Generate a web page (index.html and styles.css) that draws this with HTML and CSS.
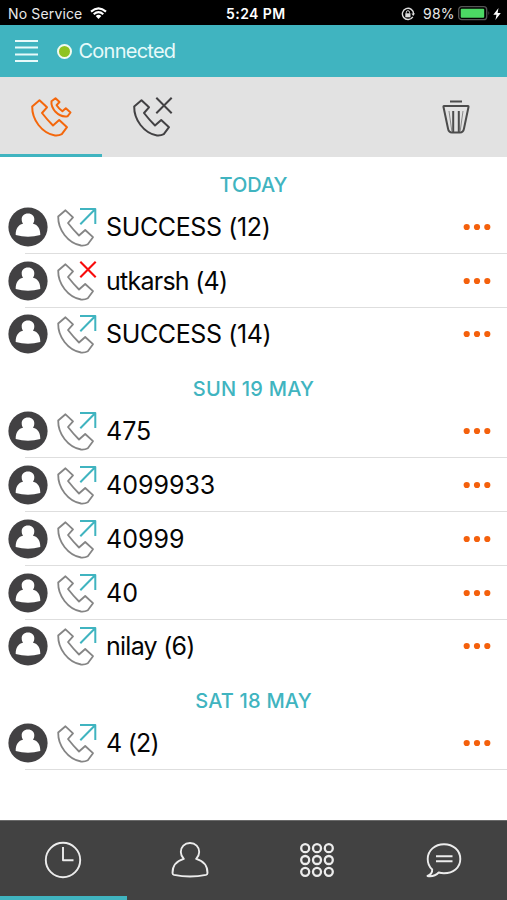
FILE: index.html
```html
<!DOCTYPE html>
<html lang="en">
<head>
<meta charset="utf-8">
<title>Call history</title>
<link rel="stylesheet" href="styles.css">
</head>
<body>
<svg class="defs" aria-hidden="true">
  <symbol id="phone" viewBox="0 0 42 42"><path d="M9.5 4.300L17 11.300L12 17Q17 23.500 23 29.500L29.200 24L37 31.200L31.800 38.200Q29 39.800 25 39.500Q15.500 38 8.500 29Q2 20.500 2.200 10.500Z"/></symbol>
  <symbol id="arrow" viewBox="0 0 42 42"><path d="M24 3H39.300V18M24.300 18.200L39.300 3"/></symbol>
  <symbol id="cross" viewBox="0 0 42 42"><path d="M24.300 1.800L39.700 17.200M39.700 1.800L24.300 17.200"/></symbol>
  <symbol id="avatar" viewBox="0 0 40 40"><circle cx="20" cy="20" r="19.600" fill="#424143"/><path d="M20 6.500c4 0 6.300 2.500 6.300 5.800 0 2.200-.6 3.300-1.300 4.500 5 1 7.300 5.200 7.300 11.200q-12.300 3.400-24.600 0c0-6 2.300-10.200 7.300-11.200-.7-1.200-1.300-2.300-1.300-4.500 0-3.300 2.300-5.800 6.300-5.800z" fill="#fff"/></symbol>
  <symbol id="dots" viewBox="0 0 28 8"><circle cx="3.700" cy="4" r="3.100"/><circle cx="14" cy="4" r="3.100"/><circle cx="24.300" cy="4" r="3.100"/></symbol>
</svg>

<header class="status">
  <span class="carrier">No Service</span>
  <svg class="wifi" width="17" height="13" viewBox="0 0 17 13"><path d="M1 4.600Q8.500-1.900 16 4.600M3.700 7.300Q8.500 3.100 13.300 7.300" fill="none" stroke="#fff" stroke-width="2.100"/><path d="M5.700 9Q8.500 6.600 11.300 9L8.500 12Z" fill="#fff"/></svg>
  <span class="time">5:24 PM</span>
  <svg class="lock" width="14" height="14" viewBox="0 0 14 14"><path d="M11.800 9.800A5.600 5.600 0 1 1 12.600 7" fill="none" stroke="#ddd" stroke-width="1.400"/><path d="M10.400 6.500H14L12.200 9Z" fill="#ddd"/><rect x="4.300" y="6.300" width="5.200" height="4" fill="#ddd"/><path d="M5.300 6.500V5.300a1.600 1.600 0 0 1 3.200 0v1.200" fill="none" stroke="#ddd"/></svg>
  <span class="percent">98%</span>
  <svg class="battery" width="33" height="15" viewBox="0 0 33 15"><rect x=".7" y=".7" width="28" height="13" rx="3" fill="none" stroke="#555" stroke-width="1.300"/><rect x="2.700" y="2.700" width="23.500" height="9" rx="1" fill="#4cd964"/><path d="M30.500 5Q32.300 7.200 30.500 9.400Z" fill="#555"/></svg>
  <svg class="bolt" width="8" height="12" viewBox="0 0 8 12"><path d="M5.500 0L.3 6.700H3.500L2.400 12 7.800 4.900H4.600Z" fill="#fff"/></svg>
</header>

<div class="appbar">
  <svg class="menu" width="23" height="24" viewBox="0 0 23 24"><path d="M0 2H23M0 8.500H23M0 15.500H23M0 22H23" stroke="#e8fafa" stroke-width="2"/></svg>
  <span class="dot"></span>
  <span class="state">Connected</span>
</div>

<nav class="tabs">
  <a class="tab active"><svg class="call orange" width="42" height="42" viewBox="0 0 42 42"><use href="#phone"/><path d="M25.500 2.200L29.500 6L26.600 9.200Q28.800 12.500 32.400 15.200L35.800 12.300L40.500 16.500L37.500 20.300Q31 21.500 25.500 15.800Q20.800 10.500 21.500 5.200Z"/></svg></a>
  <a class="tab"><svg class="call dark" width="42" height="42" viewBox="0 0 42 42"><use href="#phone"/><use href="#cross"/></svg></a>
  <a class="trash"><svg width="28" height="36" viewBox="0 0 28 36"><path d="M8 2.500H20M2 7Q1.300 7 1.500 8L6 29.500Q6.700 33.500 10 33.500H18Q21.300 33.500 22 29.500L26.500 8Q26.700 7 26 7ZM11.200 12V32.500M16.800 12V32.500" fill="none" stroke="#4c4c4c" stroke-width="2"/><path d="M7 12L9.800 32M21 12L18.200 32" fill="none" stroke="#8a8a8a" stroke-width="1"/></svg></a>
</nav>

<main class="log">
  <h2 class="today">TODAY</h2>
  <ul>
    <li><svg class="face"><use href="#avatar"/></svg><svg class="call"><use href="#phone"/><use class="out" href="#arrow"/></svg><span class="name upper">SUCCESS (12)</span><svg class="more"><use href="#dots"/></svg></li>
    <li><svg class="face"><use href="#avatar"/></svg><svg class="call"><use href="#phone"/><use class="missed" href="#cross"/></svg><span class="name lower">utkarsh (4)</span><svg class="more"><use href="#dots"/></svg></li>
    <li><svg class="face"><use href="#avatar"/></svg><svg class="call"><use href="#phone"/><use class="out" href="#arrow"/></svg><span class="name upper">SUCCESS (14)</span><svg class="more"><use href="#dots"/></svg></li>
  </ul>
  <h2>SUN 19 MAY</h2>
  <ul>
    <li><svg class="face"><use href="#avatar"/></svg><svg class="call"><use href="#phone"/><use class="out" href="#arrow"/></svg><span class="name">475</span><svg class="more"><use href="#dots"/></svg></li>
    <li><svg class="face"><use href="#avatar"/></svg><svg class="call"><use href="#phone"/><use class="out" href="#arrow"/></svg><span class="name">4099933</span><svg class="more"><use href="#dots"/></svg></li>
    <li><svg class="face"><use href="#avatar"/></svg><svg class="call"><use href="#phone"/><use class="out" href="#arrow"/></svg><span class="name">40999</span><svg class="more"><use href="#dots"/></svg></li>
    <li><svg class="face"><use href="#avatar"/></svg><svg class="call"><use href="#phone"/><use class="out" href="#arrow"/></svg><span class="name">40</span><svg class="more"><use href="#dots"/></svg></li>
    <li><svg class="face"><use href="#avatar"/></svg><svg class="call"><use href="#phone"/><use class="out" href="#arrow"/></svg><span class="name lower">nilay (6)</span><svg class="more"><use href="#dots"/></svg></li>
  </ul>
  <h2>SAT 18 MAY</h2>
  <ul class="last">
    <li><svg class="face"><use href="#avatar"/></svg><svg class="call"><use href="#phone"/><use class="out" href="#arrow"/></svg><span class="name lower">4 (2)</span><svg class="more"><use href="#dots"/></svg></li>
  </ul>
</main>

<nav class="bottom">
  <a class="active"><svg width="38" height="38" viewBox="0 0 38 38"><circle cx="19" cy="19" r="17.200"/><path d="M19 6V19.200H29.500"/></svg></a>
  <a><svg width="38" height="38" viewBox="0 0 38 38"><path d="M19 2c5.500 0 9.200 4 9.200 9 0 3.200-1.500 5.200-3 6.900 7.300 2 11.300 6.600 11.300 14.100q0 1.500-1.500 1.900-16 3.200-32 0-1.500-.4-1.500-1.900C1.500 24.500 5.500 19.900 12.800 17.900 11.300 16.200 9.800 14.200 9.800 11c0-5 3.700-9 9.200-9z"/></svg></a>
  <a><svg class="pad" width="38" height="38" viewBox="0 0 38 38"><circle cx="7.200" cy="7.200" r="4"/><circle cx="19" cy="7.200" r="4"/><circle cx="30.800" cy="7.200" r="4"/><circle cx="7.200" cy="19" r="4"/><circle cx="19" cy="19" r="4"/><circle cx="30.800" cy="19" r="4"/><circle cx="7.200" cy="30.800" r="4"/><circle cx="19" cy="30.800" r="4"/><circle cx="30.800" cy="30.800" r="4"/></svg></a>
  <a><svg width="38" height="38" viewBox="0 0 38 38"><path d="M2.500 35Q7.500 33 7.200 28.500Q2.700 24.500 2.700 18C2.700 9.500 10 3.200 19 3.200S35.300 9 35.300 18 28 32.200 19 32.200Q16 32.200 13.700 31.500Q9.500 36 2.500 35ZM11 15.200H27.500M11 20.300H27.500"/></svg></a>
</nav>
</body>
</html>
```
FILE: styles.css
```css
* { box-sizing: border-box; }
body {
  margin: 0;
  height: 900px;
  display: flex;
  flex-direction: column;
  background: #fff;
  color: #050505;
  font-family: Inter, "Liberation Sans", sans-serif;
  overflow: hidden;
}
.defs { position: absolute; width: 0; height: 0; }
svg { display: block; flex: none; }

.status {
  height: 25px;
  flex: none;
  display: flex;
  align-items: center;
  padding: 2px 6px 0 8px;
  background: #000;
  color: #e9e9e9;
  font-size: 14px;
  line-height: 20px;
  white-space: nowrap;
}
.carrier { width: 75px; letter-spacing: .15px; }
.wifi { margin-left: 7px; }
.time { margin-left: 119px; width: 61px; color: #fff; font-weight: 600; letter-spacing: .45px; }
.lock { margin-left: 114px; }
.percent { margin-left: 8px; width: 32px; letter-spacing: .2px; }
.battery { margin-left: 3px; }
.bolt { margin-left: auto; }

.appbar {
  height: 52px;
  flex: none;
  display: flex;
  align-items: center;
  padding-left: 15px;
  background: #40b4c0;
  color: #e8fafa;
}
.dot {
  width: 15px;
  height: 15px;
  margin-left: 18.5px;
  border: 2px solid #f2faef;
  border-radius: 50%;
  background: #8fc31f;
}
.state { margin-left: 7px; font-size: 20px; letter-spacing: -.75px; }

.tabs {
  height: 80px;
  flex: none;
  display: flex;
  background: #e2e2e2;
}
.tab {
  width: 102px;
  padding: 19px 0 0 30px;
  border-bottom: 3px solid transparent;
}
.tab.active { border-color: #40b4c0; }
.trash { margin: 22px 37px 0 auto; }

.call {
  width: 42px;
  height: 42px;
  fill: none;
  stroke: #858585;
  stroke-width: 1.8;
  stroke-linejoin: round;
}
.orange { stroke: #f4670c; stroke-width: 2; }
.dark { stroke: #424143; stroke-width: 2; }
.out { stroke: #40b4c0; stroke-width: 2; }
.missed { stroke: #f80b0b; stroke-width: 2.1; }

.log { flex: 1; }
h2 {
  height: 43px;
  margin: 0;
  padding-top: 16px;
  color: #40b4c0;
  font-size: 20px;
  line-height: 24px;
  font-weight: 500;
  letter-spacing: .2px;
  text-align: center;
}
.today { letter-spacing: 0; }
ul { margin: 0; padding: 0; list-style: none; }
li {
  height: 53.8px;
  display: flex;
  align-items: center;
  padding: 0 16px 0 8px;
  background: linear-gradient(#dedede, #dedede) 25px 100% / 482px 1px no-repeat;
}
li:last-child { background: none; }
.last li:last-child { background: linear-gradient(#dedede, #dedede) 25px 100% / 482px 1px no-repeat; }
.face { width: 40px; height: 40px; }
li .call { margin-left: 8px; }
.name { margin-left: 8px; font-size: 25px; line-height: 32px; letter-spacing: 0; white-space: nowrap; }
.upper { letter-spacing: -.38px; }
.lower { letter-spacing: -.75px; }
.more { width: 28px; height: 8px; margin-left: auto; fill: #f4600c; }

.bottom {
  height: 80px;
  flex: none;
  display: flex;
  background: #424242;
  border-top: 1px solid #6a6a6a;
}
.bottom a {
  flex: 1;
  display: flex;
  justify-content: center;
  padding-top: 20px;
}
.bottom .active { border-bottom: 4px solid #40b4c0; }
.bottom svg { fill: none; stroke: #ececec; stroke-width: 1.9; stroke-linejoin: round; }
.bottom .pad { stroke-width: 2.3; }
```
